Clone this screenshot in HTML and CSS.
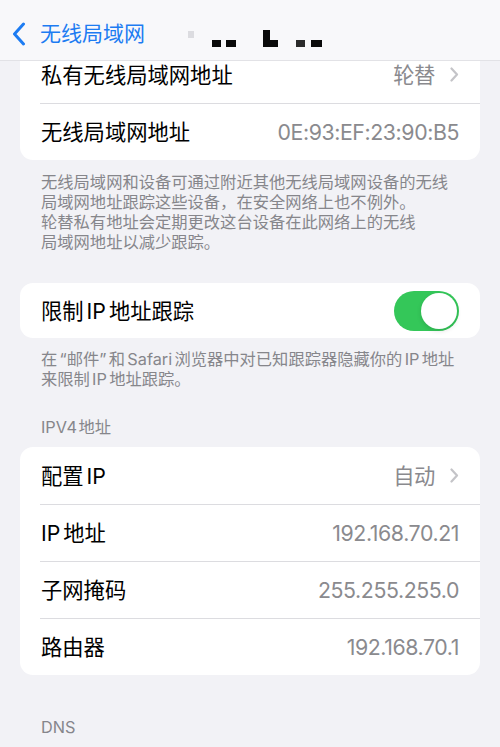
FILE: index.html
```html
<!DOCTYPE html>
<html lang="zh-CN">
<head>
<meta charset="utf-8">
<title>无线局域网</title>
<link rel="stylesheet" href="styles.css">
</head>
<body>
<div class="screen">
  <header class="navbar">
    <a class="back" href="#">
      <svg class="back-chevron" width="16" height="24" viewBox="0 0 16 24" aria-hidden="true">
        <path d="M12.5 2 L3.5 12 L12.5 22" fill="none" stroke="currentColor" stroke-width="3" stroke-linecap="round" stroke-linejoin="round"/>
      </svg>
      <span class="back-title">无线局域网</span>
    </a>
    <svg class="redacted" width="134" height="17" viewBox="0 0 134 17" aria-hidden="true">
      <rect x="0" y="1" width="6" height="7" fill="#dcdce0"/>
      <rect x="24" y="10" width="9" height="7" fill="#0a0a0a"/>
      <rect x="38" y="10" width="10" height="7" fill="#0a0a0a"/>
      <rect x="75" y="0" width="7" height="17" fill="#0a0a0a"/>
      <rect x="75" y="10" width="15" height="7" fill="#0a0a0a"/>
      <rect x="108" y="10" width="9" height="7" fill="#2a2a2a"/>
      <rect x="123" y="10" width="11" height="7" fill="#0a0a0a"/>
    </svg>
  </header>

  <main class="content">
    <section class="group group-top">
      <div class="row">
        <span class="label">私有无线局域网地址</span>
        <span class="value">轮替</span>
        <svg class="chevron" width="9" height="15" viewBox="0 0 9 15" aria-hidden="true"><path d="M1.5 1.5 L7 7.5 L1.5 13.5" fill="none" stroke="currentColor" stroke-width="2.2" stroke-linecap="round" stroke-linejoin="round"/></svg>
      </div>
      <div class="row">
        <span class="label">无线局域网地址</span>
        <span class="value">0E:93:EF:23:90:B5</span>
      </div>
    </section>
    <p class="footnote">无线局域网和设备可通过附近其他无线局域网设备的无线<br>局域网地址跟踪这些设备，在安全网络上也不例外。<br>轮替私有地址会定期更改这台设备在此网络上的无线<br>局域网地址以减少跟踪。</p>

    <section class="group group-toggle">
      <div class="row row-toggle">
        <span class="label">限制 IP 地址跟踪</span>
        <span class="switch is-on"><span class="knob"></span></span>
      </div>
    </section>
    <p class="footnote">在 “邮件” 和 Safari 浏览器中对已知跟踪器隐藏你的 IP 地址<br>来限制 IP 地址跟踪。</p>

    <h2 class="section-title">IPV4 地址</h2>
    <section class="group group-ipv4">
      <div class="row">
        <span class="label">配置 IP</span>
        <span class="value">自动</span>
        <svg class="chevron" width="9" height="15" viewBox="0 0 9 15" aria-hidden="true"><path d="M1.5 1.5 L7 7.5 L1.5 13.5" fill="none" stroke="currentColor" stroke-width="2.2" stroke-linecap="round" stroke-linejoin="round"/></svg>
      </div>
      <div class="row">
        <span class="label">IP 地址</span>
        <span class="value">192.168.70.21</span>
      </div>
      <div class="row">
        <span class="label">子网掩码</span>
        <span class="value">255.255.255.0</span>
      </div>
      <div class="row">
        <span class="label">路由器</span>
        <span class="value">192.168.70.1</span>
      </div>
    </section>

    <h2 class="section-title section-dns">DNS</h2>
  </main>
</div>
</body>
</html>
```

FILE: styles.css
```css
* {
  box-sizing: border-box;
}

html, body {
  margin: 0;
  padding: 0;
  background: #f2f2f6;
}

body {
  font-family: "Inter", "Noto Sans CJK SC", "Noto Sans", sans-serif;
  color: #000;
  -webkit-font-smoothing: antialiased;
}

.screen {
  width: 500px;
  height: 747px;
  overflow: hidden;
}

/* Navigation bar */
.navbar {
  position: relative;
  z-index: 2;
  height: 61px;
  display: flex;
  align-items: flex-start;
  background: #f8f8fa;
  border-bottom: 1px solid #e2e2e6;
}

.back {
  display: flex;
  align-items: center;
  margin: 22px 0 0 11px;
  color: #1d7cf2;
  text-decoration: none;
}

.back-chevron {
  display: block;
}

.back-title {
  margin-left: 13px;
  font-size: 21px;
  line-height: 24px;
}

.redacted {
  display: block;
  margin: 30px 0 0 43px;
}

/* Grouped list */
.content {
  display: flex;
  flex-direction: column;
}

.group {
  margin: 0 20px;
  background: #fff;
  border-radius: 13px;
  overflow: hidden;
}

.group-top {
  margin-top: -15px;
}

.group-toggle {
  margin-top: 31px;
}

.group-ipv4 {
  margin-top: 10px;
}

.row {
  display: flex;
  align-items: center;
  height: 57px;
  margin-left: 20px;
  padding-left: 1px;
  padding-right: 21px;
}

.row + .row {
  border-top: 1px solid #dcdce0;
}

.row-toggle {
  height: 55px;
}

.label {
  flex: 1;
  font-size: 21.3px;
  line-height: 26px;
  word-spacing: -3px;
  white-space: nowrap;
}

.value {
  font-size: 21.3px;
  line-height: 26px;
  letter-spacing: -0.4px;
  color: #8a8a8e;
  white-space: nowrap;
}

.chevron {
  display: block;
  margin-left: 15px;
  color: #c4c4c8;
}

/* Toggle switch */
.switch {
  position: relative;
  width: 65px;
  height: 40px;
  border-radius: 20px;
  background: #e9e9eb;
}

.switch.is-on {
  background: #34c759;
}

.knob {
  position: absolute;
  top: 2px;
  right: 2px;
  width: 36px;
  height: 36px;
  border-radius: 50%;
  background: #fff;
  box-shadow: 0 2px 5px rgba(0, 0, 0, 0.12);
}

/* Footers and headers */
.footnote {
  margin: 0;
  padding: 12px 20px 0 41px;
  font-size: 16.3px;
  line-height: 20px;
  word-spacing: -2.3px;
  color: #86868b;
  white-space: nowrap;
}

.group-toggle + .footnote {
  padding-top: 11px;
}

.section-title {
  margin: 28px 0 0;
  padding-left: 41px;
  font-size: 16.3px;
  line-height: 20px;
  font-weight: 400;
  word-spacing: -3px;
  color: #86868b;
}

.section-dns {
  margin-top: 42px;
}
```
